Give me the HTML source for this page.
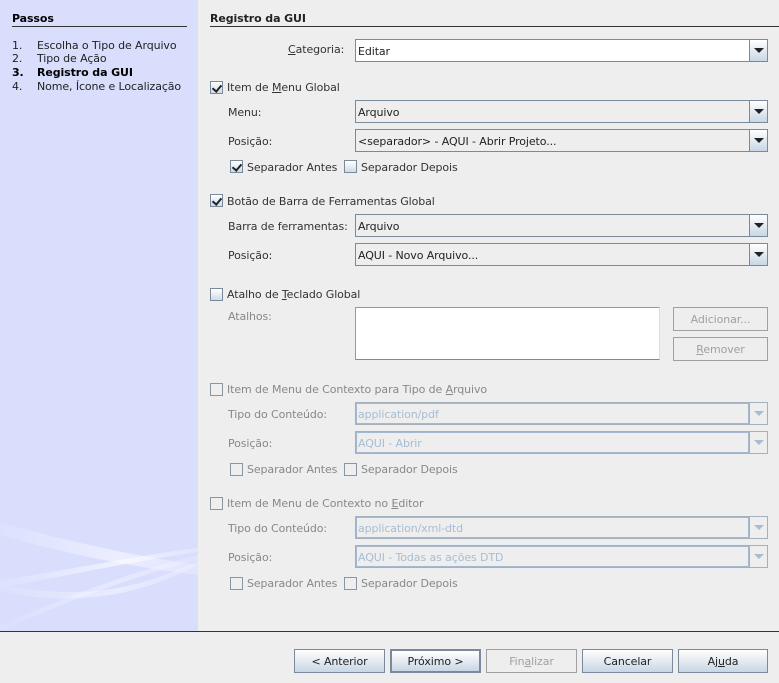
<!DOCTYPE html>
<html><head><meta charset="utf-8"><style>
*{box-sizing:border-box;margin:0;padding:0}
body{width:779px;height:683px;background:#eeeeee;font-family:"DejaVu Sans","Liberation Sans",sans-serif;font-size:11px;letter-spacing:-0.1px;color:#333;position:relative;overflow:hidden}
.a{position:absolute;white-space:nowrap}
#left{position:absolute;left:0;top:0;width:198px;height:631px;background:#d9defd;overflow:hidden}
.hline{position:absolute;height:1px;background:#333}
.cb{position:absolute;width:13px;height:13px;border:1px solid #7a8a9a;background:linear-gradient(#fff,#cfdbe8)}
.cb.d{background:#eee;border-color:#8a96a2}
.cb.c::after{content:"";position:absolute;left:3px;top:1px;width:4px;height:7px;border:solid #222;border-width:0 2px 2px 0;transform:rotate(40deg)}
.combo{position:absolute;left:355px;width:413px;height:23px;border:1px solid #7a8a9a;background:#eee}
.combo .t{position:absolute;left:2px;top:5px;color:#222}
.combo .b{position:absolute;right:0;top:0;width:18px;height:21px;border-left:1px solid #7a8a9a;background:linear-gradient(#fff,#c8d6e5)}
.combo .b::after{content:"";position:absolute;left:4px;top:8px;border-left:5px solid transparent;border-right:5px solid transparent;border-top:5px solid #222}
.combo.d{border-color:#a4b0bc}
.combo.d .t{color:#a8bcd2}
.combo.d .f{position:absolute;left:0;top:0;right:18px;bottom:0;border:1px solid #a4b8d0}
.combo.d .b{background:#eee;border-left-color:#a4b0bc}
.combo.d .b::after{border-top-color:#a8bcd2}
.btn{position:absolute;height:24px;border:1px solid #7a8a9a;background:linear-gradient(#fff,#c8d6e5);text-align:center;line-height:23px;color:#222}
.btn.dis{background:#eee;border-color:#a0a0a0;color:#a0a0a0}
.g{color:#888}
u{text-decoration:underline}
</style></head><body>
<div id="left">
<svg width="198" height="631" style="position:absolute;left:0;top:0">
<defs><linearGradient id="w" x1="0" x2="1"><stop offset="0" stop-color="#fff" stop-opacity=".1"/><stop offset=".6" stop-color="#fff" stop-opacity=".7"/><stop offset="1" stop-color="#fff" stop-opacity=".3"/></linearGradient></defs>
<path d="M0 522 C60 540 130 555 198 565 L198 575 C120 565 60 552 0 535Z" fill="url(#w)" opacity=".7"/>
<path d="M0 580 C70 570 140 555 198 548 L198 552 C140 560 70 575 0 588Z" fill="url(#w)" opacity=".8"/>
<path d="M0 585 C60 595 120 600 198 560 L198 565 C120 605 60 602 0 592Z" fill="url(#w)" opacity=".6"/>
<path d="M0 625 C60 600 120 575 198 555 L198 560 C120 580 60 605 0 631Z" fill="url(#w)" opacity=".5"/>
</svg>
<div class="a" style="left:12px;top:12px;font-weight:bold;color:#000">Passos</div>
<div class="hline" style="left:12px;top:26px;width:175px"></div>
<div class="a" style="left:12px;top:39px;color:#222">1.</div><div class="a" style="left:37px;top:39px;color:#222">Escolha o Tipo de Arquivo</div>
<div class="a" style="left:12px;top:52px;color:#222">2.</div><div class="a" style="left:37px;top:52px;color:#222">Tipo de Ação</div>
<div class="a" style="left:12px;top:66px;font-weight:bold;color:#000">3.</div><div class="a" style="left:37px;top:66px;font-weight:bold;color:#000">Registro da GUI</div>
<div class="a" style="left:12px;top:80px;color:#222">4.</div><div class="a" style="left:37px;top:80px;color:#222">Nome, Ícone e Localização</div>
</div>

<div class="a" style="left:210px;top:12px;font-weight:bold;color:#222">Registro da GUI</div>
<div class="hline" style="left:210px;top:26px;width:569px"></div>

<div class="a" style="left:288px;top:43px"><u>C</u>ategoria:</div>
<div class="combo" style="top:39px;background:#fff"><span class="t">Editar</span><span class="b"></span></div>

<div class="cb c" style="left:210px;top:81px"></div><div class="a" style="left:227px;top:81px">Item de <u>M</u>enu Global</div>
<div class="a" style="left:228px;top:106px">Menu:</div>
<div class="combo" style="top:100px"><span class="t">Arquivo</span><span class="b"></span></div>
<div class="a" style="left:228px;top:135px">Posição:</div>
<div class="combo" style="top:129px"><span class="t">&lt;separador&gt; - AQUI - Abrir Projeto...</span><span class="b"></span></div>
<div class="cb c" style="left:230px;top:160px"></div><div class="a" style="left:247px;top:161px">Separador Antes</div>
<div class="cb" style="left:344px;top:160px"></div><div class="a" style="left:361px;top:161px">Separador Depois</div>

<div class="cb c" style="left:210px;top:194px"></div><div class="a" style="left:227px;top:195px">Botão de Barra de Ferramentas Global</div>
<div class="a" style="left:228px;top:220px">Barra de ferramentas:</div>
<div class="combo" style="top:214px"><span class="t">Arquivo</span><span class="b"></span></div>
<div class="a" style="left:228px;top:249px">Posição:</div>
<div class="combo" style="top:243px"><span class="t">AQUI - Novo Arquivo...</span><span class="b"></span></div>

<div class="cb" style="left:210px;top:288px"></div><div class="a" style="left:227px;top:288px">Atalho de <u>T</u>eclado Global</div>
<div class="a g" style="left:228px;top:310px">Atalhos:</div>
<div class="a" style="left:355px;top:307px;width:305px;height:53px;background:#fff;border:1px solid #999;border-right-color:#ddd;border-bottom-color:#888"></div>
<div class="btn dis" style="left:673px;top:307px;width:95px">Adicionar...</div>
<div class="btn dis" style="left:673px;top:337px;width:95px"><u>R</u>emover</div>

<div class="cb d" style="left:210px;top:383px"></div><div class="a g" style="left:227px;top:383px">Item de Menu de Contexto para Tipo de <u>A</u>rquivo</div>
<div class="a g" style="left:228px;top:408px">Tipo do Conteúdo:</div>
<div class="combo d" style="top:402px"><span class="f"></span><span class="t">application/pdf</span><span class="b"></span></div>
<div class="a g" style="left:228px;top:437px">Posição:</div>
<div class="combo d" style="top:431px"><span class="f"></span><span class="t">AQUI - Abrir</span><span class="b"></span></div>
<div class="cb d" style="left:230px;top:463px"></div><div class="a g" style="left:247px;top:463px">Separador Antes</div>
<div class="cb d" style="left:344px;top:463px"></div><div class="a g" style="left:361px;top:463px">Separador Depois</div>

<div class="cb d" style="left:210px;top:497px"></div><div class="a g" style="left:227px;top:497px">Item de Menu de Contexto no <u>E</u>ditor</div>
<div class="a g" style="left:228px;top:522px">Tipo do Conteúdo:</div>
<div class="combo d" style="top:516px"><span class="f"></span><span class="t">application/xml-dtd</span><span class="b"></span></div>
<div class="a g" style="left:228px;top:551px">Posição:</div>
<div class="combo d" style="top:545px"><span class="f"></span><span class="t">AQUI - Todas as ações DTD</span><span class="b"></span></div>
<div class="cb d" style="left:230px;top:577px"></div><div class="a g" style="left:247px;top:577px">Separador Antes</div>
<div class="cb d" style="left:344px;top:577px"></div><div class="a g" style="left:361px;top:577px">Separador Depois</div>

<div class="hline" style="left:0;top:631px;width:779px"></div>
<div class="btn" style="left:294px;top:649px;width:91px">&lt; Anterior</div>
<div class="btn" style="left:390px;top:649px;width:91px;border:2px solid #7a8a9a;line-height:21px">Próximo &gt;</div>
<div class="btn dis" style="left:486px;top:649px;width:91px">Fin<u>a</u>lizar</div>
<div class="btn" style="left:582px;top:649px;width:91px">Cancelar</div>
<div class="btn" style="left:678px;top:649px;width:90px">Aj<u>u</u>da</div>
</body></html>
